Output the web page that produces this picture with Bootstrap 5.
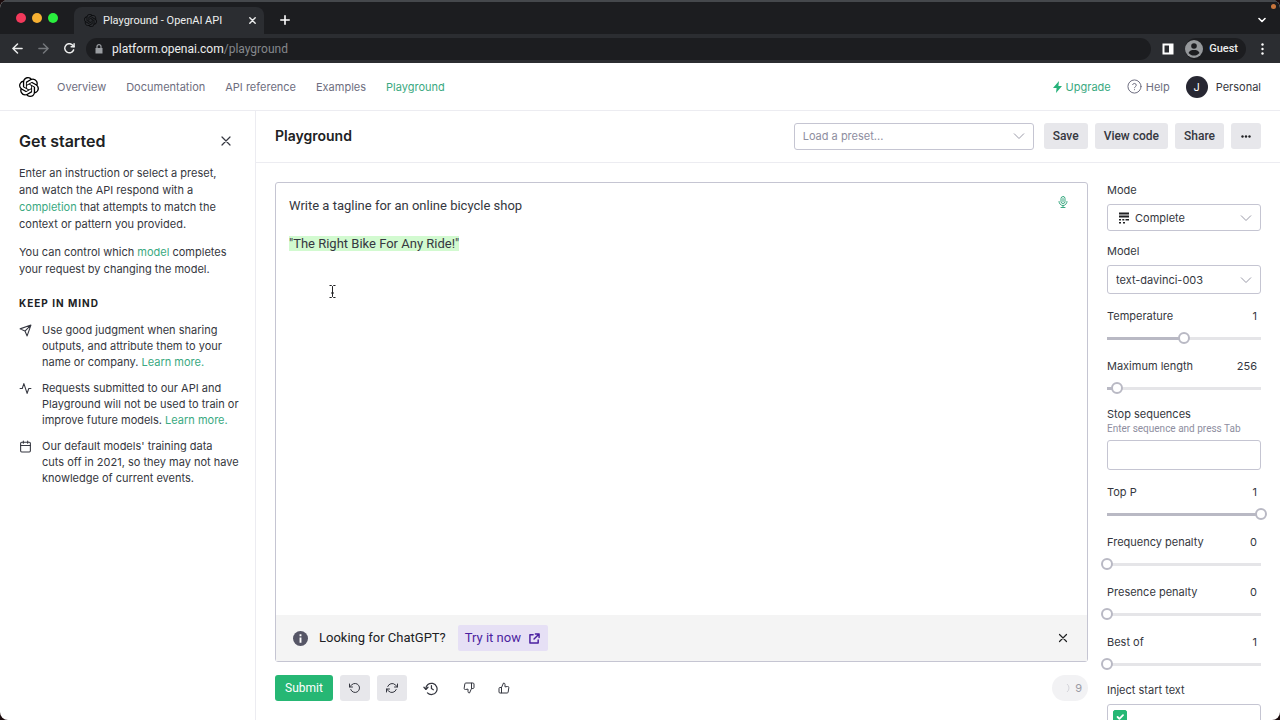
<!DOCTYPE html>
<html lang="en">
<head>
<meta charset="utf-8">
<meta name="viewport" content="width=device-width, initial-scale=1">
<title>Playground - OpenAI API</title>
<link href="https://cdn.jsdelivr.net/npm/bootstrap@5.3.0/dist/css/bootstrap.min.css" rel="stylesheet">
<style>
:root{--ink:#353740;--muted:#6e6e80;--green:#3aa981;--line:#ececf1;--field:#c5c5d2}
body{font-family:Inter,"Liberation Sans",sans-serif;font-size:11px;line-height:16px;color:var(--ink);background:#1a0b0c}
svg{display:block;flex:none}
.stroke{fill:none;stroke:currentColor;stroke-width:2;stroke-linecap:round;stroke-linejoin:round}
.thin{stroke-width:1.2}
.mid{stroke-width:1.6}
a{color:var(--green);text-decoration:none}
button{border:0;color:inherit}
.screen{height:100vh;min-height:480px;border-radius:8px;background:#fff}

/* browser frame */
.tabstrip{height:34px;gap:16px;padding-left:16px;background:#1c1d20;border-top:2px solid #45484c;font-family:Roboto,sans-serif}
.lights{gap:6px}
.light{width:10px;height:10px;border-radius:50%}
.light-close{background:#f2395b}
.light-min{background:#f6b032}
.light-max{background:#2aee3e}
.browser-tab{width:190px;height:27px;padding:0 7px 0 10px;gap:6px;background:#2b2d31;border-radius:8px 8px 0 0;color:#eceded}
.strip-icon{margin:0 14px 9px 0}
.toolbar{height:29px;gap:15px;padding:0 16px 0 12px;background:#2b2d31;color:#eceded;font-family:Roboto,sans-serif;font-size:12px}
.dim{color:#74777b}
.address{height:22px;padding:0 8px;gap:8px;border-radius:11px;background:#1c1d20;margin:0 -4px}
.address small{font-size:12px;color:#85888c}
.guest{height:22px;gap:6px;border-radius:11px;background:#1c1d20;font-size:11px;font-weight:500;margin-left:-4px}
.rec{position:absolute;top:4px;right:4px;width:5px;height:5px;border-radius:50%;background:#c9753c}

/* site header */
.site-header{height:48px;padding:0 19px;border-bottom:1px solid var(--line)}
.main-nav{gap:20px;margin-left:18px}
.site-header a{color:var(--muted)}
.site-header a.on{color:var(--green)}
.site-header a.account{color:var(--ink)}
.avatar{width:22px;height:22px;border-radius:50%;background:#272732;color:#fff}

/* left panel */
.guide{width:256px;padding:19px 0 0 19px;border-right:1px solid var(--line);white-space:nowrap}
.guide-head{padding-right:24px;margin-bottom:13px}
.guide h2{font-size:16px;line-height:22px;font-weight:600;color:#202123}
.guide p{line-height:17px;margin-bottom:11px}
.guide h3{margin:17px 0 11px;font-size:10px;line-height:16px;font-weight:700;letter-spacing:1px;color:#202123}
.guide li{display:flex;gap:10px;margin-bottom:10px}
.guide li svg{margin-top:2px}

/* work area */
.subheader{height:52px;padding:0 19px 1px;gap:7px;border-bottom:1px solid var(--line)}
.subheader h1{font-size:14px;line-height:20px;font-weight:600;color:#202123}
.tool-btn{height:26px;min-width:30px;padding:0 9px;border-radius:3px;background:#e7e7eb;font-family:Roboto,sans-serif;font-size:12px;font-weight:500;display:inline-flex;align-items:center;justify-content:center}
.pick,.entry{border:1px solid var(--field);border-radius:3px;font-size:11px;color:var(--ink);padding:0 28px 0 8px}
.pick{height:27px;line-height:20px;background-size:16px 16px;background-position:right 6px center;background-image:url("data:image/svg+xml,%3Csvg xmlns='http://www.w3.org/2000/svg' viewBox='0 0 16 16'%3E%3Cpath d='M3 5.500l5 5 5-5' fill='none' stroke='%239a9aa8'/%3E%3C/svg%3E")}
.preset{width:240px;margin-right:3px;color:#8e8ea0}
.tall{height:29px}
.work{padding:19px 0 19px 19px}
.editor{border:1px solid var(--field);border-radius:3px}
.prompt{padding:13px 13px 0;font-family:Roboto,sans-serif;font-size:13px;line-height:19px;white-space:pre-wrap;outline:0}
.reply{background:#d2fad0}
.mic{position:absolute;top:13px;right:18px;color:var(--green)}
.beam{position:absolute;left:52px;top:102px}
.notice{height:46px;padding:0 19px 0 17px;background:#f4f4f4;font-family:Roboto,sans-serif;font-size:13px;color:#202123}
.ask{margin:0 12px 0 11px}
.try{height:26px;padding:0 8px 0 7px;border-radius:2px;background:#e6e0f5;color:#4b1fa0}
.actions{gap:7px;margin-top:13px}
.submit{padding:0 10px;background:#26b774;color:#fff;font-weight:400}
.icon-btn{width:30px;padding:0}
.bare{background:none}
.vote{width:28px;min-width:28px}
.history{width:34px}
.count{width:36px;height:26px;padding-right:6px;border-radius:13px;background:#f2f2f4;color:#9a9aa5}

/* settings */
.settings{width:192px;padding:19px 19px 0}
.settings label{display:block}
.field-label{margin-bottom:6px}
.gap-above{margin-top:12px}
.line{display:flex;justify-content:space-between;padding-right:4px;margin-top:14px}
.gauge{width:calc(100% + 12px);height:12px;margin:8px -6px 12px;-webkit-appearance:none;appearance:none;background:none;display:block}
.gauge::-webkit-slider-runnable-track{height:3px;background:linear-gradient(90deg,transparent 6px,#b9b9c4 6px,#b9b9c4 var(--at),#e5e5e8 var(--at),#e5e5e8 calc(100% - 6px),transparent calc(100% - 6px))}
.gauge::-webkit-slider-thumb{-webkit-appearance:none;width:12px;height:12px;margin-top:-5px;border:2px solid #b9b9c4;border-radius:50%;background:#fff}
.hint{margin-bottom:4px;font-family:Roboto,sans-serif;font-size:10px;line-height:14px;color:#8e8ea0}
.entry{height:30px}
.mode-icon{position:absolute;left:11px;top:8px}
.with-icon{padding-left:27px}
.inject{height:30px;padding:5px;border:1px solid var(--field);border-radius:3px}
.inject .form-check-input{width:14px;height:14px;margin:0;border-radius:2px}
.inject .form-check-input:checked{background-color:#26b774;border-color:#26b774}
</style>
</head>
<body>
<div class="screen d-flex flex-column overflow-hidden position-relative">

<div class="tabstrip d-flex align-items-end flex-shrink-0">
  <div class="lights d-flex align-self-center">
    <span class="light light-close"></span><span class="light light-min"></span><span class="light light-max"></span>
  </div>
  <div class="browser-tab d-flex align-items-center">
    <svg width="13" height="13" viewBox="0 0 24 24" fill="#0c0d0f"><use href="#mark-openai"/></svg>
    <span class="flex-grow-1">Playground - OpenAI API</span>
    <svg class="stroke mid" width="9" height="9" viewBox="0 0 10 10"><path d="M2 2l6 6M8 2l-6 6"/></svg>
  </div>
  <svg class="stroke mid text-white strip-icon" width="10" height="10" viewBox="0 0 10 10"><path d="M5 .8v8.400M.8 5h8.400"/></svg>
  <svg class="stroke mid text-white ms-auto strip-icon" width="8" height="10" viewBox="0 0 8 8"><path d="M1 2.500l3 3 3-3"/></svg>
  <span class="rec"></span>
</div>

<div class="toolbar d-flex align-items-center flex-shrink-0">
  <svg class="stroke mid" width="11" height="11" viewBox="0 0 12 12"><path d="M11 6H1M6 1L1 6l5 5"/></svg>
  <svg class="stroke mid dim" width="11" height="11" viewBox="0 0 12 12"><path d="M1 6h10M6 1l5 5-5 5"/></svg>
  <svg class="stroke mid" width="11" height="11" viewBox="0 0 12 12"><path d="M10.500 7.500A5 5 0 1 1 9.800 2.700L11 4"/><path d="M11 .8V4H7.800"/></svg>
  <div class="address d-flex align-items-center flex-grow-1">
    <svg width="10" height="10" viewBox="0 0 10 10"><path d="M1.500 4h7v5.500h-7z" fill="#9a9da1"/><path d="M3 4V2.600a2 2 0 0 1 4 0V4" fill="none" stroke="#9a9da1" stroke-width="1.200"/></svg>
    <span>platform.openai.com<small>/playground</small></span>
  </div>
  <svg width="12" height="12" viewBox="0 0 12 12"><path d="M1.500 1.500h9v9h-9z" fill="none" stroke="#fff" stroke-width="2"/><path d="M7 1h4v10H7z" fill="#fff"/></svg>
  <div class="guest d-flex align-items-center pe-2">
    <svg width="18" height="18" viewBox="0 0 18 18"><circle cx="9" cy="9" r="9" fill="#95989b"/><circle cx="9" cy="6" r="2.800" fill="#1c1d20"/><path d="M3.500 13c1-2.500 3-3 5.500-3s4.500.5 5.500 3c-3 3.400-8 3.400-11 0z" fill="#1c1d20"/></svg>
    Guest
  </div>
  <svg width="3" height="12" viewBox="0 0 3 12" fill="#fff"><circle cx="1.500" cy="1.500" r="1.200"/><circle cx="1.500" cy="6" r="1.200"/><circle cx="1.500" cy="10.500" r="1.200"/></svg>
</div>

<header class="site-header d-flex align-items-center flex-shrink-0">
  <svg width="20" height="20" viewBox="0 0 24 24" fill="#000"><path id="mark-openai" d="M22.2819 9.8211a5.9847 5.9847 0 0 0-.5157-4.9108 6.0462 6.0462 0 0 0-6.5098-2.9A6.0651 6.0651 0 0 0 4.9807 4.1818a5.9847 5.9847 0 0 0-3.9977 2.9 6.0462 6.0462 0 0 0 .7427 7.0966 5.98 5.98 0 0 0 .511 4.9107 6.051 6.051 0 0 0 6.5146 2.9001A5.9847 5.9847 0 0 0 13.2599 24a6.0557 6.0557 0 0 0 5.7718-4.2058 5.9894 5.9894 0 0 0 3.9977-2.9001 6.0557 6.0557 0 0 0-.7475-7.0729zm-9.022 12.6081a4.4755 4.4755 0 0 1-2.8764-1.0408l.1419-.0804 4.7783-2.7582a.7948.7948 0 0 0 .3927-.6813v-6.7369l2.02 1.1686a.071.071 0 0 1 .038.052v5.5826a4.504 4.504 0 0 1-4.4945 4.4944zm-9.6607-4.1254a4.4708 4.4708 0 0 1-.5346-3.0137l.142.0852 4.783 2.7582a.7712.7712 0 0 0 .7806 0l5.8428-3.3685v2.3324a.0804.0804 0 0 1-.0332.0615L9.74 19.9502a4.4992 4.4992 0 0 1-6.1408-1.6464zM2.3408 7.8956a4.485 4.485 0 0 1 2.3655-1.9728V11.6a.7664.7664 0 0 0 .3879.6765l5.8144 3.3543-2.0201 1.1685a.0757.0757 0 0 1-.071 0l-4.8303-2.7865A4.504 4.504 0 0 1 2.3408 7.872zm16.5963 3.8558L13.1038 8.364 15.1192 7.2a.0757.0757 0 0 1 .071 0l4.8303 2.7913a4.4944 4.4944 0 0 1-.6765 8.1042v-5.6772a.79.79 0 0 0-.407-.667zm2.0107-3.0231l-.142-.0852-4.7735-2.7818a.7759.7759 0 0 0-.7854 0L9.409 9.2297V6.8974a.0662.0662 0 0 1 .0284-.0615l4.8303-2.7866a4.4992 4.4992 0 0 1 6.6802 4.66zM8.3065 12.863l-2.02-1.1638a.0804.0804 0 0 1-.038-.0567V6.0742a4.4992 4.4992 0 0 1 7.3757-3.4537l-.142.0805L8.704 5.459a.7948.7948 0 0 0-.3927.6813zm1.0976-2.3654l2.602-1.4998 2.6069 1.4998v2.9994l-2.5974 1.4997-2.6067-1.4997Z"/></svg>
  <nav class="main-nav d-flex">
    <a href="#">Overview</a><a href="#">Documentation</a><a href="#">API reference</a><a href="#">Examples</a><a href="#" class="on">Playground</a>
  </nav>
  <div class="d-flex align-items-center ms-auto gap-3">
    <a href="#" class="on d-flex align-items-center gap-1"><svg width="9" height="12" viewBox="0 0 9 12" fill="#26b27a"><path d="M6 0L0 7h3.600L3 12l6-7H5.400z"/></svg>Upgrade</a>
    <a href="#" class="d-flex align-items-center gap-1"><svg class="stroke mid" width="15" height="15" viewBox="0 0 24 24"><circle cx="12" cy="12" r="10.500"/><path d="M9 9a3 3 0 0 1 5.800 1c0 2-2.800 2.500-2.800 4M12 17v.2"/></svg>Help</a>
    <a href="#" class="account d-flex align-items-center gap-2"><span class="avatar d-flex align-items-center justify-content-center">J</span>Personal</a>
  </div>
</header>

<div class="d-flex flex-grow-1 overflow-hidden">
  <aside class="guide flex-shrink-0">
    <div class="guide-head d-flex align-items-center justify-content-between">
      <h2 class="mb-0">Get started</h2>
      <button class="bare p-0" aria-label="Close"><svg class="stroke thin" width="10" height="10" viewBox="0 0 10 10"><path d="M1 1l8 8M9 1l-8 8"/></svg></button>
    </div>
    <p>Enter an instruction or select a preset,<br>and watch the API respond with a<br><a href="#">completion</a> that attempts to match the<br>context or pattern you provided.</p>
    <p>You can control which <a href="#">model</a> completes<br>your request by changing the model.</p>
    <h3>KEEP IN MIND</h3>
    <ul class="list-unstyled mb-0">
      <li><svg class="stroke" width="13" height="13" viewBox="0 0 24 24"><path d="M22 2L11 13M22 2l-7 20-4-9-9-4z"/></svg><span>Use good judgment when sharing<br>outputs, and attribute them to your<br>name or company. <a href="#">Learn more.</a></span></li>
      <li><svg class="stroke" width="13" height="13" viewBox="0 0 24 24"><path d="M22 12h-4l-3 9L9 3l-3 9H2"/></svg><span>Requests submitted to our API and<br>Playground will not be used to train or<br>improve future models. <a href="#">Learn more.</a></span></li>
      <li><svg class="stroke" width="13" height="13" viewBox="0 0 24 24"><rect x="3" y="4" width="18" height="18" rx="2"/><path d="M16 2v4M8 2v4M3 10h18"/></svg><span>Our default models' training data<br>cuts off in 2021, so they may not have<br>knowledge of current events.</span></li>
    </ul>
  </aside>

  <main class="d-flex flex-column flex-grow-1 overflow-hidden">
    <div class="subheader d-flex align-items-center flex-shrink-0">
      <h1 class="mb-0 me-auto">Playground</h1>
      <select class="form-select pick preset" aria-label="Preset"><option>Load a preset...</option></select>
      <button class="tool-btn">Save</button><button class="tool-btn">View code</button><button class="tool-btn">Share</button><button class="tool-btn" aria-label="More"><svg width="10" height="3" viewBox="0 0 10 3" fill="#202123"><circle cx="1.500" cy="1.500" r="1.200"/><circle cx="5" cy="1.500" r="1.200"/><circle cx="8.500" cy="1.500" r="1.200"/></svg></button>
    </div>
    <div class="d-flex flex-grow-1 overflow-hidden">
      <section class="work d-flex flex-column flex-grow-1">
        <div class="editor d-flex flex-column flex-grow-1 position-relative">
          <div class="prompt flex-grow-1" contenteditable="true" spellcheck="false" role="textbox" aria-label="Prompt">Write a tagline for an online bicycle shop

<span class="reply">"The Right Bike For Any Ride!"</span></div>
          <svg class="mic stroke" width="12" height="12" viewBox="0 0 24 24"><rect x="8" y="1" width="8" height="14" rx="4"/><path d="M4 11a8 8 0 0 0 16 0M12 19v4M8 23h8M12 5v6"/></svg>
          <svg class="beam" width="9" height="13" viewBox="0 0 9 13" fill="none" stroke="#202123"><path d="M1.500 .5h2l1 1 1-1h2M1.500 12.500h2l1-1 1 1h2M4.500 1.500v10M3 8h3"/></svg>
          <div class="notice d-flex align-items-center">
            <svg width="15" height="15" viewBox="0 0 16 16"><circle cx="8" cy="8" r="8" fill="#565666"/><path d="M7 3.500h2v2H7zM7 7h2v5.500H7z" fill="#fff"/></svg>
            <span class="ask">Looking for ChatGPT?</span>
            <a href="#" class="try d-flex align-items-center gap-2">Try it now <svg class="stroke mid" width="11" height="11" viewBox="0 0 12 12"><path d="M4.500 2H1v9h9V7.500M7 1h4v4M11 1L5.500 6.500"/></svg></a>
            <button class="bare p-0 ms-auto" aria-label="Dismiss"><svg class="stroke thin" width="10" height="10" viewBox="0 0 10 10"><path d="M1.500 1.500l7 7M8.500 1.500l-7 7"/></svg></button>
          </div>
        </div>
        <div class="actions d-flex align-items-center flex-shrink-0">
          <button class="tool-btn submit">Submit</button>
          <button class="tool-btn icon-btn" aria-label="Undo"><svg class="stroke" width="12" height="12" viewBox="0 0 24 24"><path d="M1 4v6h6"/><path d="M3.500 15a9 9 0 1 0 2.100-9.400L1 10"/></svg></button>
          <button class="tool-btn icon-btn" aria-label="Regenerate"><svg class="stroke" width="12" height="12" viewBox="0 0 24 24"><path d="M23 4v6h-6M1 20v-6h6"/><path d="M3.500 9a9 9 0 0 1 14.900-3.400L23 10M1 14l4.600 4.400A9 9 0 0 0 20.500 15"/></svg></button>
          <button class="tool-btn icon-btn bare history" aria-label="History"><svg class="stroke" width="15" height="15" viewBox="0 0 24 24"><path d="M1.500 10l3 3.500L8 10"/><path d="M4.500 13a9 9 0 1 1 2.600 6M13.500 7.500V12l3 2"/></svg></button>
          <button class="tool-btn icon-btn bare vote" aria-label="Thumbs down"><svg class="stroke" width="12" height="12" viewBox="0 0 24 24"><path d="M10 15v4a3 3 0 0 0 3 3l4-9V2H5.700a2 2 0 0 0-2 1.700l-1.400 9a2 2 0 0 0 2 2.300zM17 2h2.700A2.300 2.300 0 0 1 22 4v7a2.300 2.300 0 0 1-2.300 2H17"/></svg></button>
          <button class="tool-btn icon-btn bare vote" aria-label="Thumbs up"><svg class="stroke" width="12" height="12" viewBox="0 0 24 24"><path d="M14 9V5a3 3 0 0 0-3-3l-4 9v11h11.300a2 2 0 0 0 2-1.700l1.400-9a2 2 0 0 0-2-2.300zM7 22H4a2 2 0 0 1-2-2v-7a2 2 0 0 1 2-2h3"/></svg></button>
          <span class="count d-flex align-items-center justify-content-end ms-auto gap-1"><svg width="5" height="10" viewBox="0 0 5 10" fill="none" stroke="#d4d4da"><path d="M1 1a5 5 0 0 1 0 8"/></svg>9</span>
        </div>
      </section>

      <section class="settings flex-shrink-0" aria-label="Settings">
        <label for="mode" class="field-label">Mode</label>
        <div class="position-relative">
          <select id="mode" class="form-select pick with-icon"><option>Complete</option></select>
          <svg class="mode-icon" width="12" height="12" viewBox="0 0 12 12" fill="#202123"><path d="M1 .5h10v2H1zM1 3.500h10v2H1zM1 7h2v1.500H1zM4.300 7h2v1.500h-2zM7.500 7H11v1.500H7.500zM1 10h2v1.500H1zM5 10h2v1.500H5z"/></svg>
        </div>
        <label for="model" class="field-label gap-above">Model</label>
        <select id="model" class="form-select pick tall"><option>text-davinci-003</option></select>
        <div class="line"><label for="temp">Temperature</label><output>1</output></div>
        <input class="gauge" id="temp" type="range" min="0" max="100" value="50" style="--at:50%">
        <div class="line"><label for="len">Maximum length</label><output>256</output></div>
        <input class="gauge" id="len" type="range" min="0" max="4000" value="256" style="--at:10%">
        <label for="stop">Stop sequences</label>
        <div class="hint" id="stophint">Enter sequence and press Tab</div>
        <input id="stop" class="form-control entry" type="text" aria-describedby="stophint">
        <div class="line"><label for="topp">Top P</label><output>1</output></div>
        <input class="gauge" id="topp" type="range" min="0" max="1" value="1" style="--at:96%">
        <div class="line"><label for="freq">Frequency penalty</label><output>0</output></div>
        <input class="gauge" id="freq" type="range" min="0" max="2" value="0" style="--at:6px">
        <div class="line"><label for="pres">Presence penalty</label><output>0</output></div>
        <input class="gauge" id="pres" type="range" min="0" max="2" value="0" style="--at:6px">
        <div class="line"><label for="best">Best of</label><output>1</output></div>
        <input class="gauge" id="best" type="range" min="1" max="20" value="1" style="--at:6px">
        <label for="inject" class="field-label">Inject start text</label>
        <div class="inject"><input class="form-check-input" type="checkbox" id="inject" checked></div>
      </section>
    </div>
  </main>
</div>
</div>
<script src="https://cdn.jsdelivr.net/npm/bootstrap@5.3.0/dist/js/bootstrap.bundle.min.js"></script>
</body>
</html>
